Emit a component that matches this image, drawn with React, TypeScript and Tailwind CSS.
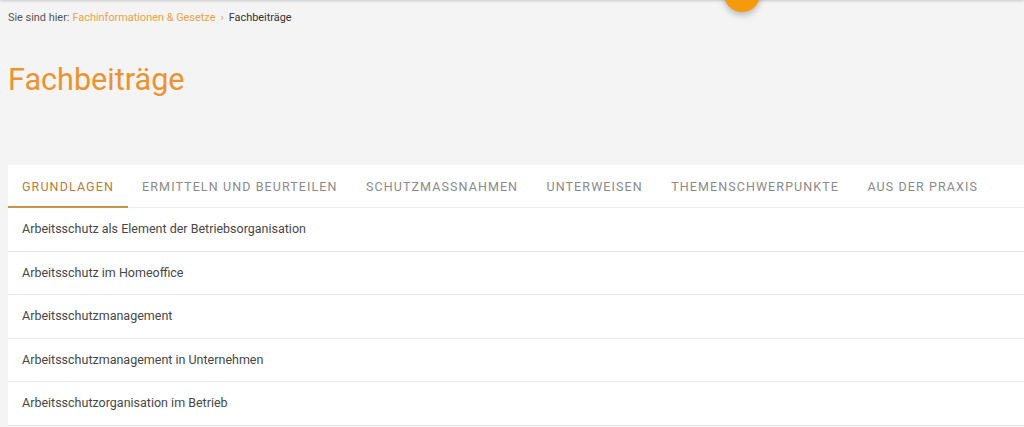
import { ChevronUp } from "lucide-react";

const tabLabels = [
  "GRUNDLAGEN",
  "ERMITTELN UND BEURTEILEN",
  "SCHUTZMASSNAHMEN",
  "UNTERWEISEN",
  "THEMENSCHWERPUNKTE",
  "AUS DER PRAXIS",
];

const articles = [
  "Arbeitsschutz als Element der Betriebsorganisation",
  "Arbeitsschutz im Homeoffice",
  "Arbeitsschutzmanagement",
  "Arbeitsschutzmanagement in Unternehmen",
  "Arbeitsschutzorganisation im Betrieb",
];

export default function App() {
  return (
    <div className="relative h-[427px] w-[1024px] overflow-hidden bg-[#f4f4f4] font-['Roboto',sans-serif]">
      {/* header shadow peeking in from above */}
      <div className="absolute inset-x-0 -top-2 h-2 bg-[#f4f4f4] shadow-[0_1px_3px_rgba(0,0,0,0.18)]" />

      {/* back-to-top button, mostly scrolled out */}
      <button className="absolute left-[724px] top-[-24px] flex h-9 w-9 items-end justify-center rounded-full bg-[#f39a0d] pb-[10px] shadow-[0_3px_6px_rgba(0,0,0,0.25)]">
        <ChevronUp className="h-3 w-3 text-[#7a3c00]" strokeWidth={3} />
      </button>

      <div className="pl-2 pt-[11px]">
        <nav className="flex items-center text-[10.9px] leading-[14px] text-[#555]">
          <span>Sie sind hier:</span>
          <a className="ml-[3px] text-[#eea144]" href="#">
            Fachinformationen &amp; Gesetze
          </a>
          <span className="mx-[5px] text-[#eea144]">›</span>
          <span className="text-[#333]">Fachbeiträge</span>
        </nav>

        <h1 className="mt-[37px] text-[30.6px] leading-[36px] font-normal text-[#ea9330]">
          Fachbeiträge
        </h1>

        <div className="mt-[67px] bg-white">
          <div className="flex h-[43px] border-b border-[#ececec]">
            {tabLabels.map((label, i) => (
              <div
                key={label}
                className={
                  i === 0
                    ? "flex h-[43px] items-center border-b-2 border-[#c8924b] pl-[14px] pr-[14px] pt-[3px] text-[12.5px] tracking-[1.1px] text-[#b77d3c]"
                    : "flex h-[43px] items-center px-[14.2px] pt-[1px] text-[12.5px] tracking-[1.1px] text-[#8a8a8a]"
                }
              >
                {label}
              </div>
            ))}
          </div>
          {articles.map((a) => (
            <div
              key={a}
              className="flex h-[43.5px] items-center border-b border-[#e6e6e6] px-[14px] pt-[1px] text-[12.5px] text-[#474747]"
            >
              {a}
            </div>
          ))}
        </div>
      </div>
    </div>
  );
}
